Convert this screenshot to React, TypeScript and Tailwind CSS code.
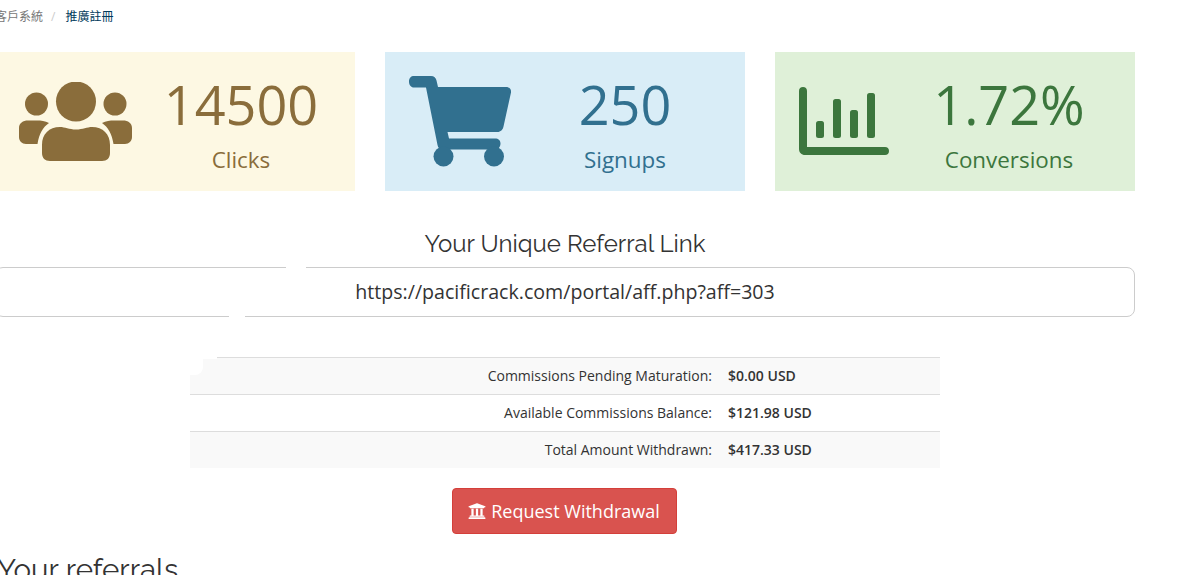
import { FaUniversity } from "react-icons/fa";

const heading = "font-['Raleway','Lato','Liberation_Sans',sans-serif]";

function UsersIcon() {
  return (
    <svg viewBox="0 0 113 79" className="w-[113px] h-[79px]" fill="#8a6d3b">
      <circle cx="57" cy="19.500" r="20" />
      <circle cx="17.500" cy="22" r="11.500" />
      <circle cx="96" cy="22" r="11.500" />
      <path d="M0 46c0-5 4-7.500 9-7.500h9c4 0 8 .5 12 2.500-6 4-10 11-11.500 21H7c-4 0-7-3-7-7z" />
      <path d="M113 46c0-5-4-7.500-9-7.500h-9c-4 0-8 .5-12 2.500 6 4 10 11 11.500 21H106c4 0 7-3 7-7z" />
      <path d="M23 63c0-11 7-18 18-18 5 0 9 2.500 16 2.500S68 45 73 45c11 0 18 7 18 18v8c0 5-3 8-8 8H31c-5 0-8-3-8-8z" />
    </svg>
  );
}

function CartIcon() {
  return (
    <svg viewBox="0 0 102 91" className="w-[102px] h-[91px]" fill="#31708f">
      <path d="M5 0h17c3 0 5 2 5.500 4.500L29 11h68c3.500 0 5.500 2.500 5 5.500l-7.500 34c-.5 3-3 5.500-6 5.500H38.500l1.500 6.500h46c3.500 0 5.500 2 5.500 5s-2 6-5.500 6H34c-3 0-5-1.500-5.500-4.500L17 11.500H5c-3 0-5-2.500-5-6S2 0 5 0z" />
      <circle cx="34.500" cy="80.500" r="10" />
      <circle cx="85" cy="80.500" r="10" />
    </svg>
  );
}

function ChartIcon() {
  return (
    <svg viewBox="0 0 90 68" className="w-[90px] h-[68px]" fill="#3c763d">
      <path d="M4 0c2.500 0 4 1.500 4 4v56h78c2.500 0 4 1.500 4 4s-1.500 4-4 4H6c-3.500 0-6-2.500-6-6V4c0-2.500 1.500-4 4-4z" />
      <rect x="17" y="34" width="8" height="17" rx="2.500" />
      <rect x="34" y="12" width="8" height="39" rx="2.500" />
      <rect x="51" y="23" width="8" height="28" rx="2.500" />
      <rect x="68" y="6" width="8" height="45" rx="2.500" />
    </svg>
  );
}

function StatBox({
  icon,
  value,
  label,
  box,
  side,
}: {
  icon: React.ReactNode;
  value: string;
  label: string;
  box: string;
  side: string;
}) {
  return (
    <div className={`h-[139px] flex ${box}`}>
      <div className={`shrink-0 ${side}`}>{icon}</div>
      <div className="flex-1 text-center pt-[17px]">
        <div className="text-[54px] leading-[70px] font-normal">{value}</div>
        <div className="text-[22.400px] leading-[30px] mt-[6px]">{label}</div>
      </div>
    </div>
  );
}

const rows = [
  { label: "Commissions Pending Maturation:", value: "$0.00 USD", striped: true },
  { label: "Available Commissions Balance:", value: "$121.98 USD", striped: false },
  { label: "Total Amount Withdrawn:", value: "$417.33 USD", striped: true },
];

export default function App() {
  return (
    <div className="h-[575px] overflow-hidden bg-white font-['Open_Sans','Noto_Sans_CJK_TC',sans-serif] text-[#333]">
      <div className="w-[1140px] -ml-[5px]">
        <div className="h-[52px] pt-[8px] text-[12px] leading-[18px] flex">
          <span className="text-[#777]">客戶系統</span>
          <span className="text-[#ccc] ml-[8px]">/</span>
          <span className="text-[#003a5c] ml-[10px]">推廣註冊</span>
        </div>

        <div className="grid grid-cols-3 gap-[30px]">
          <StatBox
            icon={<UsersIcon />}
            value="14500"
            label="Clicks"
            box="bg-[#fdf8e3] text-[#8a6d3b]"
            side="w-[132px] pl-[24px] pt-[30px]"
          />
          <StatBox
            icon={<CartIcon />}
            value="250"
            label="Signups"
            box="bg-[#d9edf7] text-[#31708f]"
            side="w-[120px] pl-[24px] pt-[24px]"
          />
          <StatBox
            icon={<ChartIcon />}
            value="1.72%"
            label="Conversions"
            box="bg-[#dff0d8] text-[#3c763d]"
            side="w-[108px] pl-[24px] pt-[35px]"
          />
        </div>

        <h2 className={`${heading} text-[24px] leading-[30px] text-center text-[#333] mt-[38px]`}>
          Your Unique Referral Link
        </h2>

        <div className="relative mt-[8px] h-[50px] border border-[#ccc] rounded-[8px] flex items-center justify-center text-[19.600px] text-[#333]">
          https://pacificrack.com/portal/aff.php?aff=303
          <span className="absolute left-[290px] -top-[2px] w-[20px] h-[3px] bg-white" />
          <span className="absolute left-[233px] -bottom-[2px] w-[16px] h-[3px] bg-white" />
        </div>

        <div className="relative w-[750px] mx-auto mt-[40px] text-[14px] leading-[20px]">
          {rows.map((row) => (
            <div
              key={row.label}
              className={`h-[37px] border-t border-[#ddd] flex items-center pb-[1px] ${row.striped ? "bg-[#f9f9f9]" : ""}`}
            >
              <div className="w-[522px] text-right">{row.label}</div>
              <div className="ml-[16px] font-semibold">{row.value}</div>
            </div>
          ))}
          <span className="absolute left-0 top-0 w-[27px] h-[2px] bg-white" />
          <span className="absolute left-0 top-0 w-[13px] h-[18px] bg-white rounded-br-[8px]" />
        </div>

        <div className="flex justify-center mt-[20px] pr-[2px]">
          <button className="h-[46px] w-[225px] bg-[#d9534f] border border-[#d43f3a] rounded-[4px] text-white text-[18px] flex items-center justify-center gap-[5px]">
            <FaUniversity className="w-[18px] h-[18px]" />
            Request Withdrawal
          </button>
        </div>

        <h2 className={`${heading} text-[29.500px] leading-[40px] text-[#333] mt-[16px] pl-[2px]`}>Your referrals</h2>
      </div>
    </div>
  );
}
